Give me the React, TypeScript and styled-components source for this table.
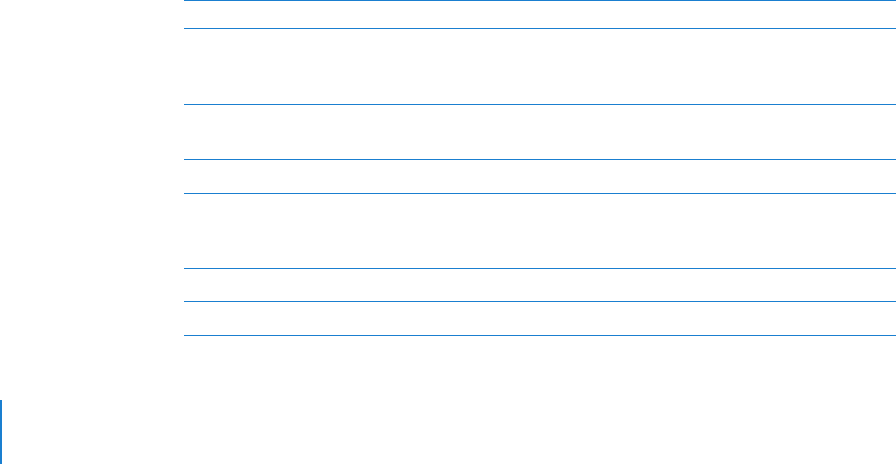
import React from "react";
import styled, { createGlobalStyle } from "styled-components";

const Global = createGlobalStyle`
  html, body { margin: 0; padding: 0; background: #ffffff; }
  body { font-family: "Liberation Sans", Arial, sans-serif; width: 896px; height: 464px; overflow: hidden; }
`;

const BLUE = "#1a7fd0";

const Page = styled.div`
  width: 896px;
  height: 464px;
  display: flex;
  flex-direction: column;
  background: #ffffff;
`;

const TableWrap = styled.div`
  padding-left: 184px;
  display: flex;
  flex-direction: column;
`;

const Table = styled.div`
  display: flex;
  flex-direction: column;
  border-top: 1px solid ${BLUE};
`;

const Row = styled.div<{ $h: number }>`
  height: ${(p) => p.$h}px;
  border-bottom: 1px solid ${BLUE};
  display: grid;
  grid-template-columns: 1fr 1fr;
  font-size: 11px;
  color: #ffffff;
`;

const Cell = styled.div`
  padding: 6px 8px;
`;

const Bottom = styled.div`
  flex: 1;
  display: flex;
  padding-top: 64px;
`;

const SideRule = styled.div`
  width: 2px;
  background: ${BLUE};
`;

const rows = [27, 75, 54, 33, 74, 32, 33];

export default function App() {
  return (
    <Page>
      <Global />
      <TableWrap>
        <Table>
          {rows.map((h, i) => (
            <Row key={i} $h={h}>
              <Cell />
              <Cell />
            </Row>
          ))}
        </Table>
      </TableWrap>
      <Bottom>
        <SideRule />
      </Bottom>
    </Page>
  );
}
